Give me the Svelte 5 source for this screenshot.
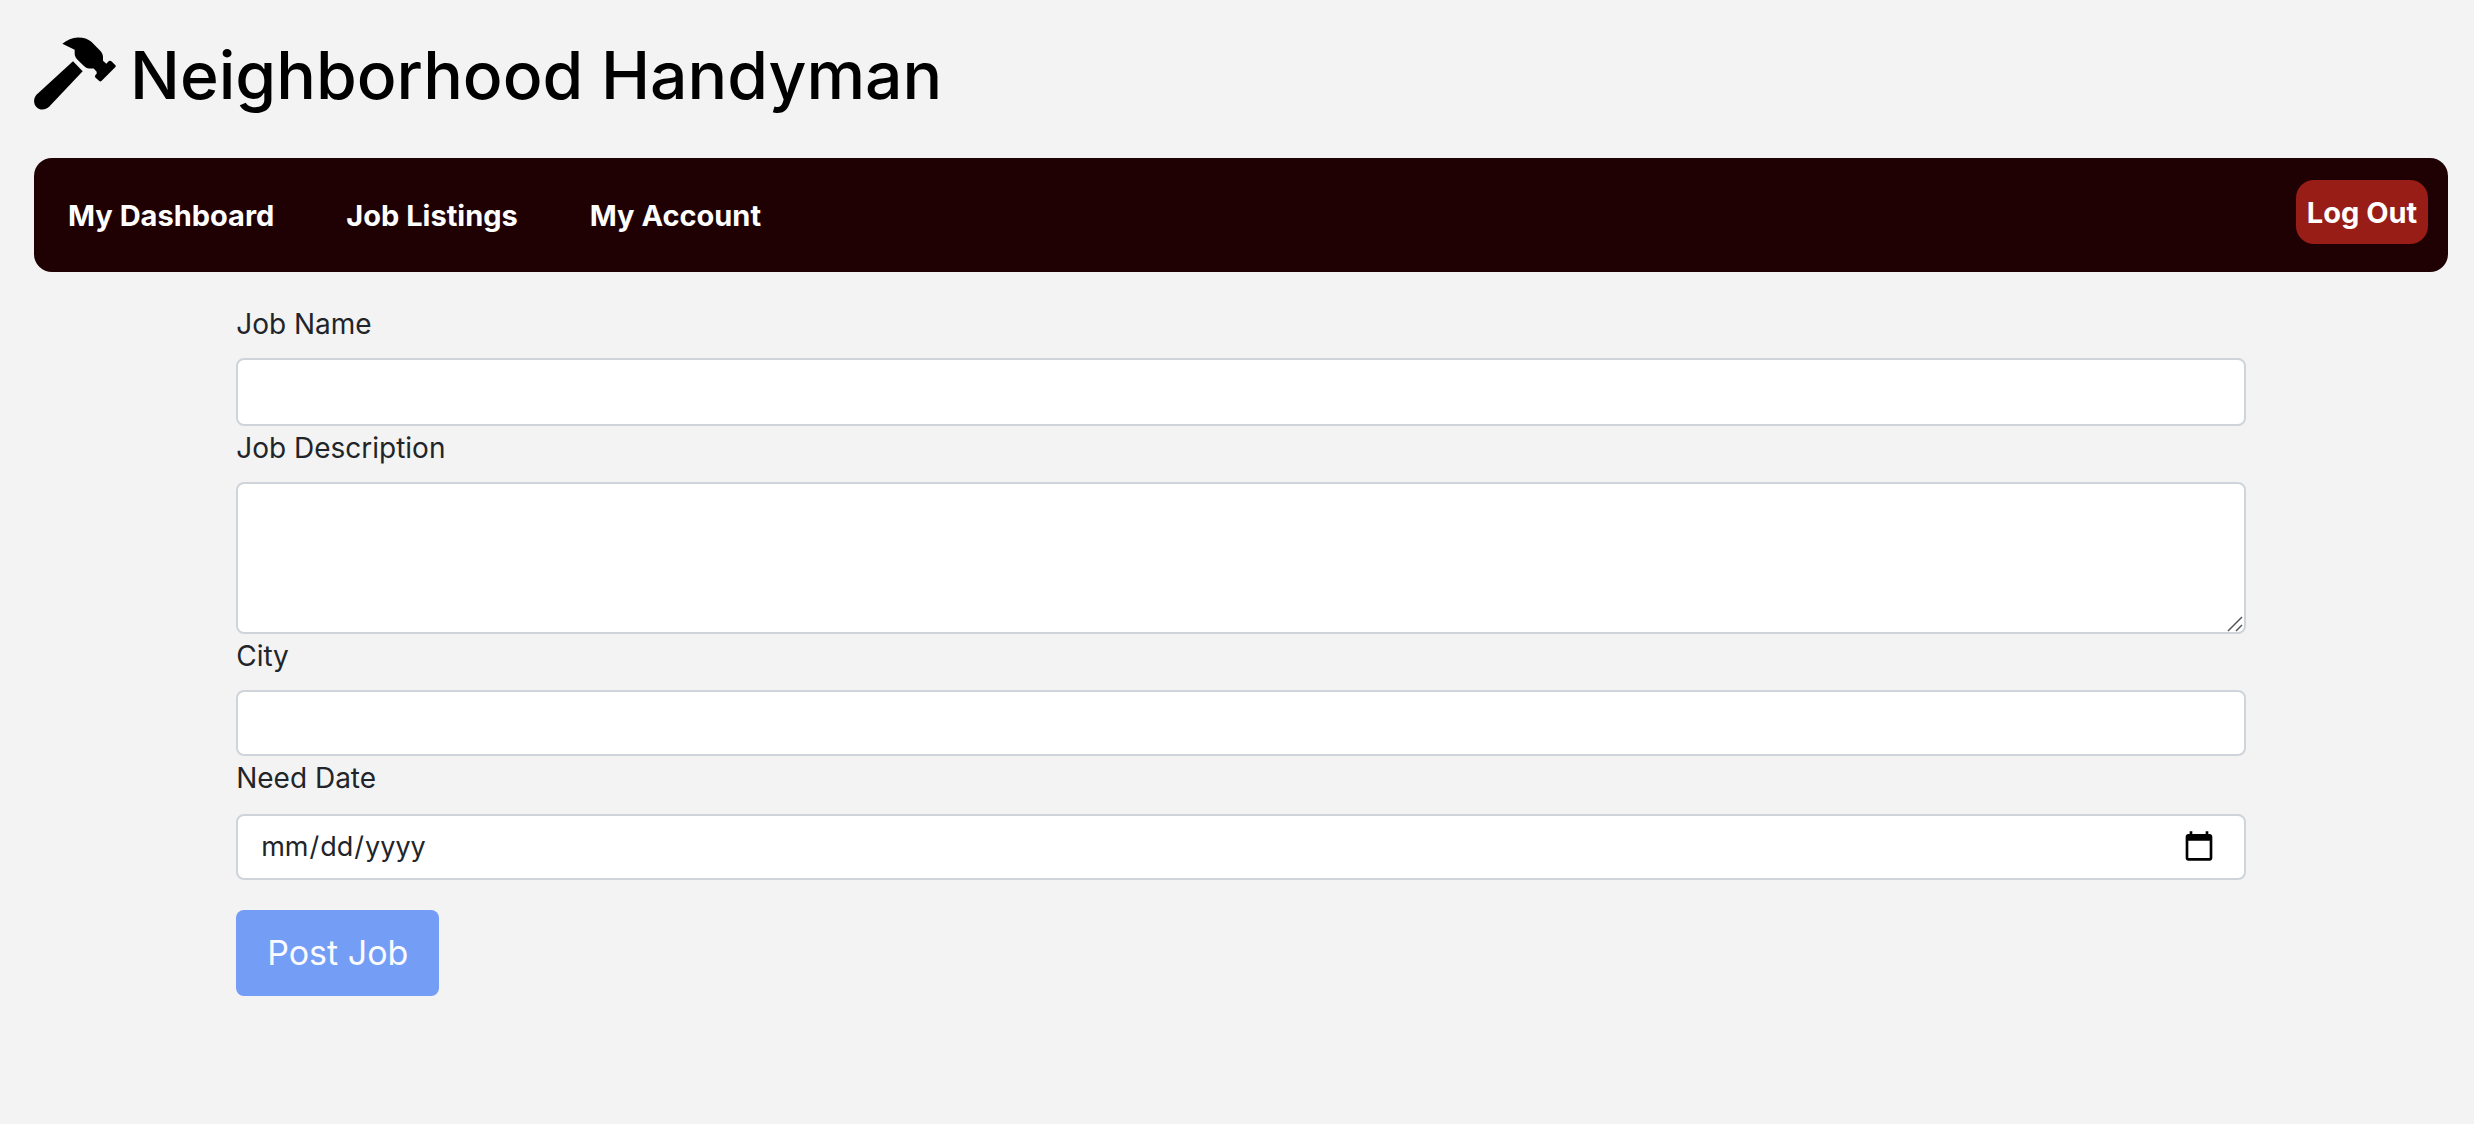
<script>
  let name = $state('');
  let description = $state('');
  let city = $state('');
  let date = $state('');
  let incomplete = $derived(!name || !description || !city || !date);

  const links = ['My Dashboard', 'Job Listings', 'My Account'];
</script>

<div class="page">
  <header class="brand">
    <svg class="hammer" viewBox="99 50 246 218" aria-hidden="true">
      <path d="M184 70C198 58 214 51 231 51C249 51 261 55 271 64L297 90C304 98 306 103 306 111L306 121L316 130L322 123Q327 119 332 123L344 135V139L302 181Q298 185 294 181L283 171Q280 167 284 163L287 160V154L278 144H265C258 144 253 141 248 136L228 116C222 109 221 104 221 97V88Z" />
      <path d="M216 122L245 152L145 258C133 270 116 269 107 260C97 250 96 233 108 221Z" />
    </svg>
    <h1>Neighborhood Handyman</h1>
  </header>

  <nav class="bar" aria-label="Main">
    <ul class="links">
      {#each links as link}
        <li><a href="#{link.toLowerCase().replace(' ', '-')}">{link}</a></li>
      {/each}
    </ul>
    <button class="logout" type="button">Log Out</button>
  </nav>

  <main>
    <form onsubmit={(e) => e.preventDefault()}>
      <label for="job-name">Job Name</label>
      <input id="job-name" class="control tall" type="text" bind:value={name} />

      <label for="job-description">Job Description</label>
      <div class="area">
        <textarea id="job-description" class="control" bind:value={description}></textarea>
        <svg class="grip" viewBox="0 0 16 16" aria-hidden="true">
          <path d="M1 15L15 1M9 15L15 9" />
        </svg>
      </div>

      <label for="city">City</label>
      <input id="city" class="control" type="text" bind:value={city} />

      <label class="date-label" for="need-date">Need Date</label>
      <input id="need-date" class="control" type="date" bind:value={date} />

      <button class="post" type="submit" disabled={incomplete}>Post Job</button>
    </form>
  </main>
</div>

<style>
  :global(body) {
    background: #f3f3f3;
  }

  .page {
    padding: 24px 26px 24px 34px;
    font-family: Inter, 'Liberation Sans', sans-serif;
    font-size: 28px;
    color: #212529;
  }

  .page :global(*) {
    box-sizing: border-box;
  }

  .brand {
    display: flex;
    align-items: center;
    gap: 14px;
    height: 102px;
    margin-bottom: 32px;
    color: #000;
  }

  .hammer {
    width: 82px;
    height: 73px;
    margin-bottom: 4px;
    fill: currentColor;
    flex: none;
  }

  h1 {
    margin: 0;
    font-size: 66px;
    line-height: 84px;
    font-weight: 500;
    white-space: nowrap;
  }

  .bar {
    display: flex;
    justify-content: space-between;
    align-items: flex-start;
    padding: 22px 20px 28px 34px;
    background: #200103;
    border-radius: 18px;
    font-size: 29px;
    font-weight: 700;
  }

  .links {
    display: flex;
    gap: 72px;
    margin: 0;
    padding: 14px 0 6px;
    list-style: none;
    line-height: 44px;
  }

  .links a {
    color: #fff;
    text-decoration: none;
  }

  .logout {
    height: 64px;
    width: 132px;
    padding: 0;
    border: 0;
    border-radius: 18px;
    background: #981d16;
    color: #fff;
    font: inherit;
  }

  form {
    display: flex;
    flex-direction: column;
    width: 83.25%;
    margin: 30px auto 0;
  }

  label {
    line-height: 44px;
    margin-bottom: 12px;
  }

  .date-label {
    margin-bottom: 14px;
  }

  .control {
    display: block;
    width: 100%;
    height: 66px;
    padding: 10px 22px;
    border: 2px solid #ced4da;
    border-radius: 8px;
    background: #fff;
    color: #212529;
    font: inherit;
    line-height: 42px;
  }

  .tall {
    height: 68px;
  }

  .area {
    position: relative;
  }

  textarea.control {
    height: 152px;
    resize: vertical;
  }

  textarea::-webkit-resizer {
    background: transparent;
  }

  input[type='date'] {
    font-size: 27px;
  }

  input[type='date']::-webkit-calendar-picker-indicator {
    width: 34px;
    height: 34px;
    padding: 0;
    margin-right: 6px;
  }

  .grip {
    position: absolute;
    right: 3px;
    bottom: 2px;
    width: 16px;
    height: 16px;
    fill: none;
    stroke: #555;
    stroke-width: 1.5;
    pointer-events: none;
  }

  .post {
    align-self: flex-start;
    margin-top: 30px;
    padding: 22px 31px;
    border: 0;
    border-radius: 8px;
    background: #749df5;
    color: #fafbff;
    font: inherit;
    font-size: 34px;
    line-height: 42px;
  }
</style>
